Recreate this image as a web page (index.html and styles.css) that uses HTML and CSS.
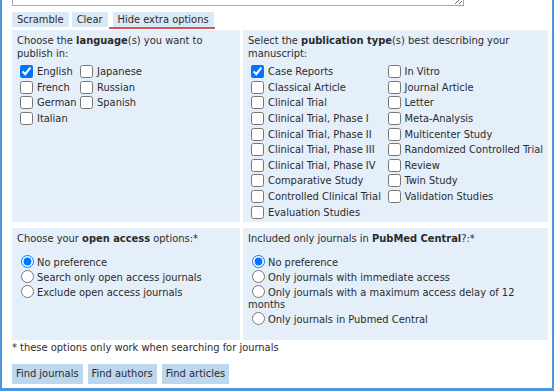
FILE: index.html
```html
<!DOCTYPE html>
<html lang="en">
<head>
    <meta charset="UTF-8">
    <title>Journal / Author Name Estimator - options</title>
    <link rel="stylesheet" href="styles.css">
</head>
<body>
    <div class="frame">
        <textarea class="abstract"></textarea>

        <div class="toolbar">
            <button class="small-btn">Scramble</button>
            <button class="small-btn">Clear</button>
            <span class="active-tab"><button class="small-btn">Hide extra options</button></span>
        </div>

        <div class="options-grid">
            <div class="panel">
                <p class="panel-title">Choose the <b>language</b>(s) you want to publish in:</p>
                <div class="check-cols lang-cols">
                    <div class="check-col">
                        <label class="check-row"><input type="checkbox" checked> English</label>
                        <label class="check-row"><input type="checkbox"> French</label>
                        <label class="check-row"><input type="checkbox"> German</label>
                        <label class="check-row"><input type="checkbox"> Italian</label>
                    </div>
                    <div class="check-col">
                        <label class="check-row"><input type="checkbox"> Japanese</label>
                        <label class="check-row"><input type="checkbox"> Russian</label>
                        <label class="check-row"><input type="checkbox"> Spanish</label>
                    </div>
                </div>
            </div>

            <div class="panel">
                <p class="panel-title">Select the <b>publication type</b>(s) best describing your manuscript:</p>
                <div class="check-cols">
                    <div class="check-col">
                        <label class="check-row"><input type="checkbox" checked> Case Reports</label>
                        <label class="check-row"><input type="checkbox"> Classical Article</label>
                        <label class="check-row"><input type="checkbox"> Clinical Trial</label>
                        <label class="check-row"><input type="checkbox"> Clinical Trial, Phase I</label>
                        <label class="check-row"><input type="checkbox"> Clinical Trial, Phase II</label>
                        <label class="check-row"><input type="checkbox"> Clinical Trial, Phase III</label>
                        <label class="check-row"><input type="checkbox"> Clinical Trial, Phase IV</label>
                        <label class="check-row"><input type="checkbox"> Comparative Study</label>
                        <label class="check-row"><input type="checkbox"> Controlled Clinical Trial</label>
                        <label class="check-row"><input type="checkbox"> Evaluation Studies</label>
                    </div>
                    <div class="check-col">
                        <label class="check-row"><input type="checkbox"> In Vitro</label>
                        <label class="check-row"><input type="checkbox"> Journal Article</label>
                        <label class="check-row"><input type="checkbox"> Letter</label>
                        <label class="check-row"><input type="checkbox"> Meta-Analysis</label>
                        <label class="check-row"><input type="checkbox"> Multicenter Study</label>
                        <label class="check-row"><input type="checkbox"> Randomized Controlled Trial</label>
                        <label class="check-row"><input type="checkbox"> Review</label>
                        <label class="check-row"><input type="checkbox"> Twin Study</label>
                        <label class="check-row"><input type="checkbox"> Validation Studies</label>
                    </div>
                </div>
            </div>

            <div class="panel">
                <p class="panel-title">Choose your <b>open access</b> options:*</p>
                <div class="radio-list">
                    <label class="radio-row"><input type="radio" name="oa" checked>No preference</label>
                    <label class="radio-row"><input type="radio" name="oa">Search only open access journals</label>
                    <label class="radio-row"><input type="radio" name="oa">Exclude open access journals</label>
                </div>
            </div>

            <div class="panel">
                <p class="panel-title">Included only journals in <b>PubMed Central</b>?:*</p>
                <div class="radio-list">
                    <label class="radio-row"><input type="radio" name="pmc" checked>No preference</label>
                    <label class="radio-row"><input type="radio" name="pmc">Only journals with immediate access</label>
                    <label class="radio-row"><input type="radio" name="pmc">Only journals with a maximum access delay of 12 months</label>
                    <label class="radio-row"><input type="radio" name="pmc">Only journals in Pubmed Central</label>
                </div>
            </div>
        </div>

        <p class="note">* these options only work when searching for journals</p>

        <div class="actions">
            <button class="find-btn">Find journals</button>
            <button class="find-btn">Find authors</button>
            <button class="find-btn">Find articles</button>
        </div>
    </div>
</body>
</html>
```

FILE: styles.css
```css
* {
    margin: 0;
    padding: 0;
    box-sizing: border-box;
}

body {
    font-family: "DejaVu Sans Condensed", "DejaVu Sans", Verdana, sans-serif;
    font-stretch: condensed;
    font-size: 11px;
    color: #2b2b2b;
    background: white;
}

.frame {
    width: 554px;
    height: 391px;
    border-left: 2px solid #4f95dc;
    border-right: 2px solid #4f95dc;
    border-bottom: 3px solid #4f95dc;
    padding: 0 4px 0 10px;
    overflow: hidden;
}

.abstract {
    display: block;
    width: 452px;
    height: 20px;
    margin-top: -14px;
    border: 1px solid #a9a9a9;
    resize: vertical;
}

.toolbar {
    display: flex;
    align-items: flex-start;
    gap: 3px;
    margin-top: 6px;
    height: 18px;
}

button {
    font-family: inherit;
    font-stretch: condensed;
    font-size: 11px;
    color: #2b2b2b;
    border: none;
    cursor: pointer;
}

.small-btn {
    background: #dbe8f5;
    height: 15px;
    padding: 0 5px;
    line-height: 15px;
}

.active-tab {
    display: inline-block;
    margin-left: -2px;
    padding: 0 1px 0 4px;
    height: 17px;
    border-bottom: 2px solid #d9534f;
}

.options-grid {
    display: grid;
    grid-template-columns: 228px 305px;
    column-gap: 3px;
    row-gap: 6px;
}

.panel {
    background: #e4effa;
    padding: 4px 5px 2px;
}

.panel-title {
    line-height: 13px;
    margin-bottom: 4px;
}

.check-cols {
    display: flex;
    padding-left: 3px;
}

.lang-cols .check-col:first-child {
    width: 60px;
}

.check-col:first-child {
    width: 137px;
}

.check-row {
    display: flex;
    align-items: center;
    gap: 4px;
    height: 15.6px;
    white-space: nowrap;
}

.check-row input {
    width: 13px;
    height: 13px;
    margin: 0;
}

.radio-list {
    padding-top: 7px;
    padding-bottom: 10px;
}

.radio-row {
    display: block;
    line-height: 12px;
    padding: 1.5px 0;
}

.radio-row input {
    width: 13px;
    height: 13px;
    margin: -2px 3px -2px 4px;
    vertical-align: -2px;
}

.note {
    margin-top: 1px;
    line-height: 13px;
}

.actions {
    display: flex;
    gap: 5px;
    margin-top: 10px;
}

.find-btn {
    background: #bdd7ee;
    height: 20px;
    padding: 0 4px;
}
```
